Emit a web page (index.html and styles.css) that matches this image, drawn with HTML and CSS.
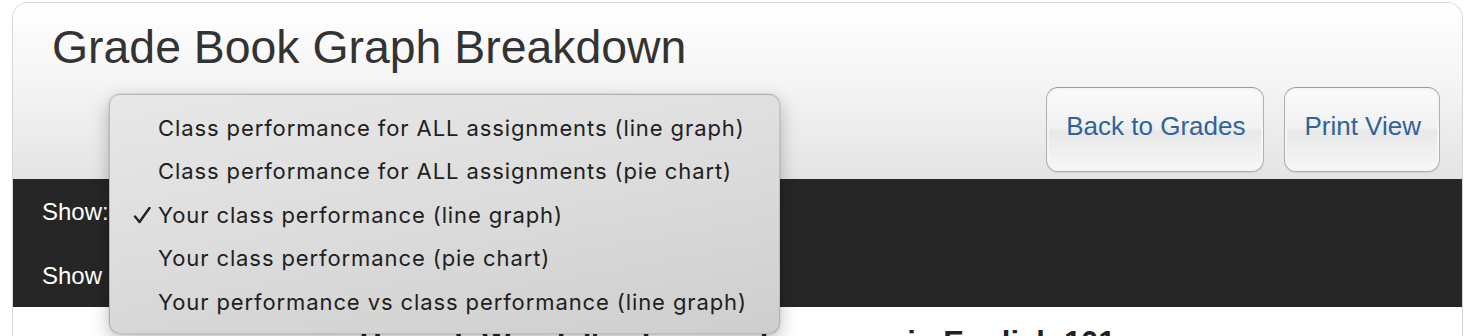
FILE: index.html
```html
<!DOCTYPE html>
<html>
<head>
<meta charset="utf-8">
<link rel="stylesheet" href="styles.css">
</head>
<body>
<div class="panel">
  <div class="header">
    <h1 class="title">Grade Book Graph Breakdown</h1>
    <div class="actions">
      <a class="btn">Back to Grades</a>
      <a class="btn">Print View</a>
    </div>
  </div>
  <div class="controls">
    <div class="row">Show:</div>
    <div class="row">Show</div>
  </div>
  <div class="content">
    <h2 class="chart-title">Hannah Wendel's class performance in English 101</h2>
  </div>
</div>
<div class="menu">
  <div class="item">Class performance for ALL assignments (line graph)</div>
  <div class="item">Class performance for ALL assignments (pie chart)</div>
  <div class="item checked"><svg class="check" viewBox="0 0 18 18" width="18" height="18"><path d="M2 10.5 L6.5 16 L16.5 2" fill="none" stroke="#222" stroke-width="2.4" stroke-linecap="round" stroke-linejoin="round"/></svg>Your class performance (line graph)</div>
  <div class="item">Your class performance (pie chart)</div>
  <div class="item">Your performance vs class performance (line graph)</div>
</div>
</body>
</html>
```

FILE: styles.css
```css
html, body {
  margin: 0;
  padding: 0;
  background: #ffffff;
  overflow: hidden;
}
body {
  width: 1464px;
  height: 336px;
  font-family: "Liberation Sans", Arial, sans-serif;
}
.panel {
  margin: 2px 1px 0 12px;
  border: 1px solid #d6d6d6;
  border-bottom: none;
  border-radius: 16px 16px 0 0;
  background: #fff;
  overflow: hidden;
}
.header {
  display: flex;
  justify-content: space-between;
  align-items: flex-end;
  height: 176px;
  box-sizing: border-box;
  padding: 0 22px 7px 39px;
  background: linear-gradient(to bottom, #ffffff 0%, #f6f6f6 40%, #e4e4e4 100%);
  position: relative;
}
.title {
  align-self: flex-start;
  margin: 18px 0 0 0;
  font-size: 46.4px;
  font-weight: normal;
  color: #333333;
  line-height: 52px;
}
.actions {
  display: flex;
  gap: 20px;
}
.btn {
  display: flex;
  align-items: center;
  justify-content: center;
  height: 85px;
  box-sizing: border-box;
  padding: 0 18px 6px 19px;
  border: 1px solid #b0b0b0;
  border-top-color: #9c9c9c;
  border-radius: 12px;
  background: linear-gradient(to bottom, #fbfbfb 0%, #f1f1f1 48%, #e8e8e8 52%, #f7f7f7 100%);
  box-shadow: inset 0 0 0 2px #f5f5f5, 0 1px 1px rgba(0,0,0,0.08);
  color: #2f6499;
  font-size: 26px;
  text-decoration: none;
}
.controls {
  background: #262626;
  color: #ffffff;
  height: 128px;
  padding: 0 0 0 29px;
  display: flex;
  flex-direction: column;
}
.row {
  height: 62px;
  display: flex;
  align-items: center;
  font-size: 24px;
}
.row:first-child {
  height: 68px;
}
.content {
  background: #ffffff;
  height: 40px;
  display: flex;
  justify-content: center;
}
.chart-title {
  margin: 18px 0 0 0;
  font-size: 31px;
  font-weight: bold;
  color: #222;
  line-height: 36px;
  white-space: nowrap;
}
.menu {
  position: absolute;
  left: 109px;
  top: 94px;
  width: 671px;
  height: 240px;
  box-sizing: border-box;
  padding-top: 11px;
  border: 1px solid rgba(0,0,0,0.16);
  border-radius: 11px;
  background: linear-gradient(170deg, #e8e8e8 0%, #dcdcdc 50%, #cecece 100%);
  box-shadow: 0 6px 18px rgba(0,0,0,0.25), 0 0 2px rgba(0,0,0,0.2);
  font-family: Inter, "Noto Sans", sans-serif;
  font-size: 22px;
  letter-spacing: 0.9px;
  color: #202020;
}
.item {
  position: relative;
  height: 43.5px;
  display: flex;
  align-items: center;
  padding-left: 48px;
  white-space: nowrap;
}
.check {
  position: absolute;
  left: 23px;
  top: 13px;
}
```
